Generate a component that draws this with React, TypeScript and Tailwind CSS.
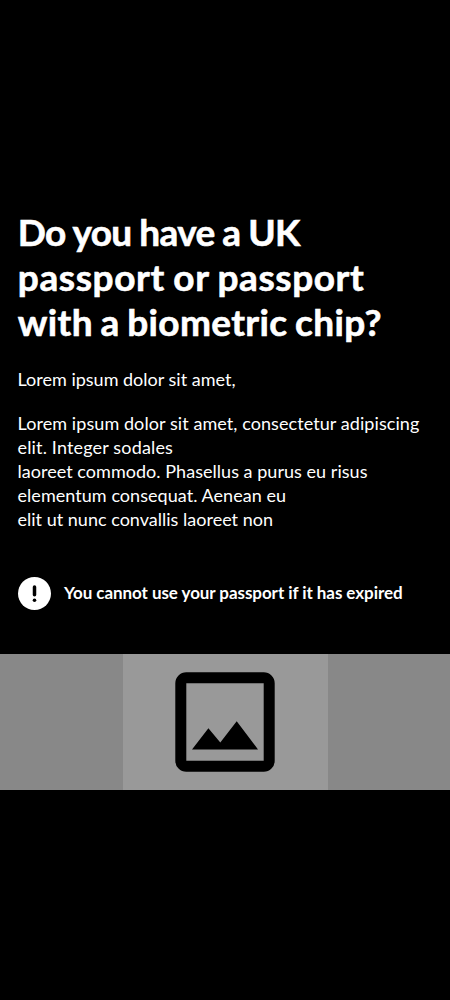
import React from 'react';

const heading = [
  { text: 'Do you have a UK', cls: 'tracking-[-0.68px] [word-spacing:-0.5px]' },
  { text: 'passport or passport', cls: 'tracking-[0.6px] [word-spacing:-1px]' },
  { text: 'with a biometric chip?', cls: 'tracking-[0.36px] [word-spacing:-1.8px]' },
];

const body = [
  { text: 'Lorem ipsum dolor sit amet, consectetur adipiscing', cls: 'tracking-[0.075px]' },
  { text: 'elit. Integer sodales', cls: 'tracking-[0.16px]' },
  { text: 'laoreet commodo. Phasellus a purus eu risus', cls: 'tracking-[0.035px]' },
  { text: 'elementum consequat. Aenean eu', cls: 'tracking-[0.05px]' },
  { text: 'elit ut nunc convallis laoreet non', cls: 'tracking-[0.01px]' },
];

function AlertIcon() {
  return (
    <svg className="size-[33px] shrink-0" viewBox="0 0 33 33" aria-hidden="true">
      <circle cx="16.5" cy="16.5" r="16.5" fill="#fff" />
      <path d="M16.5 10.1v7.6" stroke="#000" strokeWidth="3.5" strokeLinecap="round" />
      <circle cx="16.5" cy="23.2" r="1.8" fill="#000" />
    </svg>
  );
}

function PictureIcon() {
  return (
    <svg className="size-[100px]" viewBox="0 0 100 100" aria-hidden="true">
      <path
        fillRule="evenodd"
        d="M11.3.2h77.4a11 11 0 0 1 11 11v77.6a11 11 0 0 1-11 11H11.3a11 11 0 0 1-11-11V11.2a11 11 0 0 1 11-11ZM11.3 11.2v77.6h77.4V11.2Z"
      />
      <path d="M17 77.4 33.4 56.3 45.3 70.4 61.7 49.3 83 77.4Z" />
    </svg>
  );
}

export default function App() {
  return (
    <main className="flex h-[1000px] w-full flex-col bg-black pt-[209px] font-['Lato','Noto_Sans',sans-serif] text-white">
      <h1 className="px-[17.8px] text-[37px] font-bold leading-[45px] [-webkit-text-stroke:0.6px_white]">
        {heading.map((line) => (
          <span key={line.text} className={`block whitespace-nowrap ${line.cls}`}>{line.text}</span>
        ))}
      </h1>
      <p className="mt-[23px] px-[17.5px] text-[18px] leading-6">Lorem ipsum dolor sit amet,</p>
      <p className="mt-5 px-[17.5px] text-[18px] leading-6">
        {body.map((line) => (
          <span key={line.text} className={`block whitespace-nowrap ${line.cls}`}>{line.text}</span>
        ))}
      </p>
      <div className="mt-[46px] flex h-[33px] items-center px-[17.5px]">
        <AlertIcon />
        <strong className="-mt-[2px] ml-[13.5px] whitespace-nowrap text-[17px] font-bold leading-6 tracking-[-0.065px]">
          You cannot use your passport if it has expired
        </strong>
      </div>
      <div className="mt-[43.7px] flex h-[136.6px] justify-center bg-[#888888]">
        <div className="flex w-[205px] items-center justify-center bg-[#999999] text-black">
          <PictureIcon />
        </div>
      </div>
    </main>
  );
}
